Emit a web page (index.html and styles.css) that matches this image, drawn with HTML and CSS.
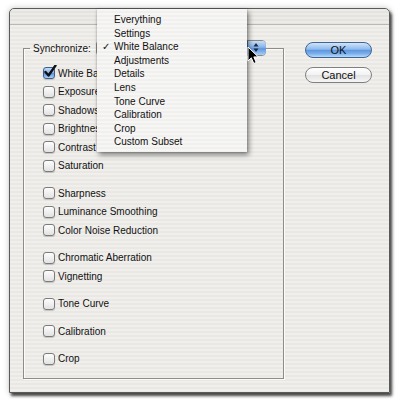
FILE: index.html
```html
<!DOCTYPE html>
<html>
<head>
<meta charset="utf-8">
<link rel="stylesheet" href="styles.css">
</head>
<body>
<div class="window">
  <div class="titlebar"></div>
  <div class="content">
    <fieldset class="group">
      <legend class="legend">
        <span class="legend-label">Synchronize:</span>
        <span class="popup">
          <span class="popup-face"></span>
          <span class="popup-arrows">
            <svg width="18" height="15" viewBox="0 0 18 15"><polygon points="9,3 6.5,6.5 11.5,6.5" fill="#1d2a3a"/><polygon points="6.5,8.5 11.5,8.5 9,12" fill="#1d2a3a"/></svg>
          </span>
        </span>
      </legend>
      <div class="sets">
        <div class="set">
          <div class="row"><span class="box checked"><svg width="14" height="14" viewBox="0 0 14 14"><path d="M2.5 7 L5.5 10.5 L12.5 0.5" fill="none" stroke="#111" stroke-width="2.4" stroke-linecap="round" stroke-linejoin="round"/></svg></span><span>White Balance</span></div>
          <div class="row"><span class="box"></span><span>Exposure</span></div>
          <div class="row"><span class="box"></span><span>Shadows</span></div>
          <div class="row"><span class="box"></span><span>Brightness</span></div>
          <div class="row"><span class="box"></span><span>Contrast</span></div>
          <div class="row"><span class="box"></span><span>Saturation</span></div>
        </div>
        <div class="set">
          <div class="row"><span class="box"></span><span>Sharpness</span></div>
          <div class="row"><span class="box"></span><span>Luminance Smoothing</span></div>
          <div class="row"><span class="box"></span><span>Color Noise Reduction</span></div>
        </div>
        <div class="set">
          <div class="row"><span class="box"></span><span>Chromatic Aberration</span></div>
          <div class="row"><span class="box"></span><span>Vignetting</span></div>
        </div>
        <div class="set">
          <div class="row"><span class="box"></span><span>Tone Curve</span></div>
        </div>
        <div class="set">
          <div class="row"><span class="box"></span><span>Calibration</span></div>
        </div>
        <div class="set">
          <div class="row"><span class="box"></span><span>Crop</span></div>
        </div>
      </div>
    </fieldset>
    <div class="buttons">
      <button class="btn btn-ok">OK</button>
      <button class="btn btn-cancel">Cancel</button>
    </div>
  </div>
  <ul class="menu">
    <li class="menu-item">Everything</li>
    <li class="menu-item">Settings</li>
    <li class="menu-item selected"><span class="check">✓</span>White Balance</li>
    <li class="menu-item">Adjustments</li>
    <li class="menu-item">Details</li>
    <li class="menu-item">Lens</li>
    <li class="menu-item">Tone Curve</li>
    <li class="menu-item">Calibration</li>
    <li class="menu-item">Crop</li>
    <li class="menu-item">Custom Subset</li>
  </ul>
  <svg class="cursor" width="13" height="19" viewBox="0 0 13 19"><path d="M1 1 L1 15 L4.3 11.8 L6.8 17.5 L9.2 16.4 L6.8 10.9 L11.2 10.9 Z" fill="#000" stroke="#fff" stroke-width="1" stroke-linejoin="round"/></svg>
</div>
</body>
</html>
```

FILE: styles.css
```css
html, body {
  margin: 0;
  padding: 0;
}

body {
  width: 400px;
  height: 406px;
  overflow: hidden;
  background: #ffffff;
  font-family: "Liberation Sans", Arial, sans-serif;
  font-size: 10px;
  color: #111111;
}

.window {
  position: relative;
  margin: 8px 0 0 9px;
  width: 379px;
  height: 383px;
  border: 1px solid #5a5a5a;
  border-radius: 5px 5px 0 0;
  background: repeating-linear-gradient(180deg, #f0efec 0 2px, #e9e8e5 2px 4px);
  box-shadow: 2px 3px 3px rgba(0, 0, 0, 0.7), 0 0 6px rgba(0, 0, 0, 0.22);
}

.titlebar {
  height: 15px;
  border-bottom: 1px solid #b9b8b5;
  border-radius: 5px 5px 0 0;
  background: repeating-linear-gradient(180deg, #ecebe8 0 2px, #e4e3e0 2px 4px);
}

.content {
  display: flex;
  align-items: flex-start;
  padding: 15px 0 0 13px;
}

.group {
  box-sizing: border-box;
  width: 261px;
  height: 339px;
  margin: 0;
  padding: 0;
  min-width: 0;
  border: 1px solid #8c8c8a;
  box-shadow: inset 1px 1px 0 #fbfbfa, 1px 1px 0 #fbfbfa;
}

.legend {
  display: flex;
  align-items: center;
  height: 16px;
  margin-left: 6px;
  padding: 0 0 0 3px;
}

.legend-label {
  width: 63px;
}

.popup {
  position: relative;
  box-sizing: border-box;
  display: flex;
  align-items: center;
  width: 170px;
  height: 16px;
  border: 1px solid #8a8a8a;
  border-radius: 4px;
  background: linear-gradient(180deg, #ffffff, #e8e8e8);
}

.popup-face {
  flex: 1;
  height: 100%;
}

.popup-arrows {
  display: flex;
  width: 18px;
  height: 14px;
  margin-right: -1px;
  border-left: 1px solid #4f76a8;
  border-radius: 0 4px 4px 0;
  background: linear-gradient(180deg, #c9def6 0%, #86b2ea 45%, #5f95dd 55%, #a9cff6 100%);
}

.popup-arrows svg {
  margin: -1px 0 0 -1px;
}

.sets {
  display: flex;
  flex-direction: column;
  gap: 9px;
  padding: 8px 0 0 19px;
}

.row {
  display: flex;
  align-items: center;
  gap: 3px;
  height: 18.5px;
}

.box {
  position: relative;
  box-sizing: border-box;
  flex: none;
  width: 12px;
  height: 12px;
  border: 1px solid #7b7b7b;
  border-radius: 3px;
  background: linear-gradient(180deg, #fdfdfd, #e2e2e2);
  box-shadow: 0 1px 1px rgba(0, 0, 0, 0.18);
}

.box.checked {
  border-color: #3e5f8e;
  background: linear-gradient(180deg, #c3dbf6 0%, #7fb0ec 50%, #5c96e0 55%, #a8cff6 100%);
}

.box.checked svg {
  position: absolute;
  left: -1px;
  top: -3px;
}

.buttons {
  display: flex;
  flex-direction: column;
  gap: 9px;
  margin: 2px 0 0 21px;
}

.btn {
  box-sizing: border-box;
  width: 67px;
  height: 16px;
  padding: 0;
  border-radius: 8px;
  font-family: "Liberation Sans", Arial, sans-serif;
  font-size: 11px;
  line-height: 14px;
  color: #111;
}

.btn-ok {
  border: 1px solid #3f6597;
  background: linear-gradient(180deg, #d2e4f8 0%, #8dbaee 45%, #5f97e0 52%, #79aeea 75%, #b7dafa 100%);
}

.btn-cancel {
  border: 1px solid #808080;
  background: linear-gradient(180deg, #ffffff 0%, #f2f2f2 48%, #e2e2e2 52%, #f6f6f6 100%);
}

.menu {
  position: absolute;
  left: 87px;
  top: 0;
  box-sizing: border-box;
  width: 150px;
  height: 143px;
  margin: 0;
  padding: 4px 0 3px;
  list-style: none;
  background: repeating-linear-gradient(180deg, #f6f6f4 0 2px, #f1f0ee 2px 4px);
  box-shadow: 2px 3px 5px rgba(0, 0, 0, 0.45), 0 0 2px rgba(0, 0, 0, 0.25);
}

.menu-item {
  position: relative;
  height: 13.6px;
  line-height: 13.6px;
  padding-left: 17px;
  color: #111111;
}

.check {
  position: absolute;
  left: 5px;
  top: 0;
  font-family: "DejaVu Sans", sans-serif;
  font-size: 10px;
}

.cursor {
  position: absolute;
  left: 237px;
  top: 37px;
}
```
